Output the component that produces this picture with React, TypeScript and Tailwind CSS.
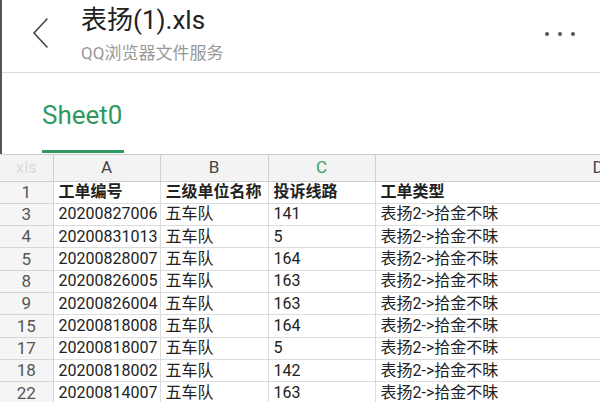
import React from 'react';

const FONT = "font-['Roboto','Noto_Sans_CJK_SC',sans-serif]";

type Row = { n: string; a: string; b: string; c: string; d: string; bold?: boolean };

const ROWS: Row[] = [
  { n: '1', a: '工单编号', b: '三级单位名称', c: '投诉线路', d: '工单类型', bold: true },
  { n: '3', a: '20200827006', b: '五车队', c: '141', d: '表扬2->拾金不昧' },
  { n: '4', a: '20200831013', b: '五车队', c: '5', d: '表扬2->拾金不昧' },
  { n: '5', a: '20200828007', b: '五车队', c: '164', d: '表扬2->拾金不昧' },
  { n: '8', a: '20200826005', b: '五车队', c: '163', d: '表扬2->拾金不昧' },
  { n: '9', a: '20200826004', b: '五车队', c: '163', d: '表扬2->拾金不昧' },
  { n: '15', a: '20200818008', b: '五车队', c: '164', d: '表扬2->拾金不昧' },
  { n: '17', a: '20200818007', b: '五车队', c: '5', d: '表扬2->拾金不昧' },
  { n: '18', a: '20200818002', b: '五车队', c: '142', d: '表扬2->拾金不昧' },
  { n: '22', a: '20200814007', b: '五车队', c: '163', d: '表扬2->拾金不昧' },
];

function BackIcon() {
  return (
    <svg width="18" height="32" viewBox="0 0 18 32" fill="none">
      <path d="M15 2 L2 16 L15 30" stroke="#444" strokeWidth="1.6" strokeLinecap="round" strokeLinejoin="round" />
    </svg>
  );
}

function MoreIcon() {
  return (
    <div className="flex items-center gap-[9px]">
      <span className="w-[4px] h-[4px] rounded-full bg-[#555]" />
      <span className="w-[4px] h-[4px] rounded-full bg-[#555]" />
      <span className="w-[4px] h-[4px] rounded-full bg-[#555]" />
    </div>
  );
}

const cell = 'h-[22.33px] px-[5px] border-r border-b border-[#dcdcdc] whitespace-nowrap overflow-hidden text-[16px] text-[#222] leading-none';

export default function App() {
  return (
    <div className={`w-[600px] h-[402px] overflow-hidden bg-white ${FONT}`}>
      <div className="border-l-2 border-[#555]">
        <div className="h-[73px] flex items-center border-b border-[#ddd] relative">
          <div className="pl-[30px] w-[79px] flex items-center mb-[6px]">
            <BackIcon />
          </div>
          <div className="flex flex-col">
            <div className="text-[26px] leading-[30px] text-[#222] mt-[-4px]">表扬(1).xls</div>
            <div className="text-[17px] leading-[20px] text-[#999] mt-[8px]">QQ浏览器文件服务</div>
          </div>
          <div className="ml-auto mr-[25px] mb-[5px]">
            <MoreIcon />
          </div>
        </div>
        <div className="h-[81px] pl-[40px] flex flex-col justify-end">
          <div className="text-[26px] leading-[30px] text-[#2f9a60] mb-[20px]">Sheet0</div>
          <div className="w-[82px] h-[3px] bg-[#2f9a60] mb-[1px]" />
        </div>
      </div>

      <table className="table-fixed border-collapse w-[821px]">
        <colgroup>
          <col className="w-[53px]" />
          <col className="w-[107px]" />
          <col className="w-[108px]" />
          <col className="w-[107px]" />
          <col className="w-[446px]" />
        </colgroup>
        <thead>
          <tr className="bg-[#f3f3f3] h-[25px] border-t border-[#cfcfcf]">
            <th className="border-r border-b border-[#cfcfcf] text-[16px] font-normal text-[#dadada]">xls</th>
            <th className="border-r border-b border-[#cfcfcf] text-[17px] font-normal text-[#444]">A</th>
            <th className="border-r border-b border-[#cfcfcf] text-[17px] font-normal text-[#444]">B</th>
            <th className="border-r border-b border-[#cfcfcf] text-[17px] font-normal text-[#3a9e5c]">C</th>
            <th className="border-r border-b border-[#cfcfcf] text-[17px] font-normal text-[#444]">D</th>
          </tr>
        </thead>
        <tbody>
          {ROWS.map((r) => (
            <tr key={r.n}>
              <td className="h-[22.33px] bg-[#f5f5f5] border-r border-b border-[#d6d6d6] text-center text-[17px] text-[#555] leading-none">{r.n}</td>
              <td className={`${cell} ${r.bold ? 'font-bold' : ''}`}>{r.a}</td>
              <td className={`${cell} ${r.bold ? 'font-bold' : ''}`}>{r.b}</td>
              <td className={`${cell} ${r.bold ? 'font-bold' : ''}`}>{r.c}</td>
              <td className={`${cell} ${r.bold ? 'font-bold' : ''}`}>{r.d}</td>
            </tr>
          ))}
        </tbody>
      </table>
    </div>
  );
}
